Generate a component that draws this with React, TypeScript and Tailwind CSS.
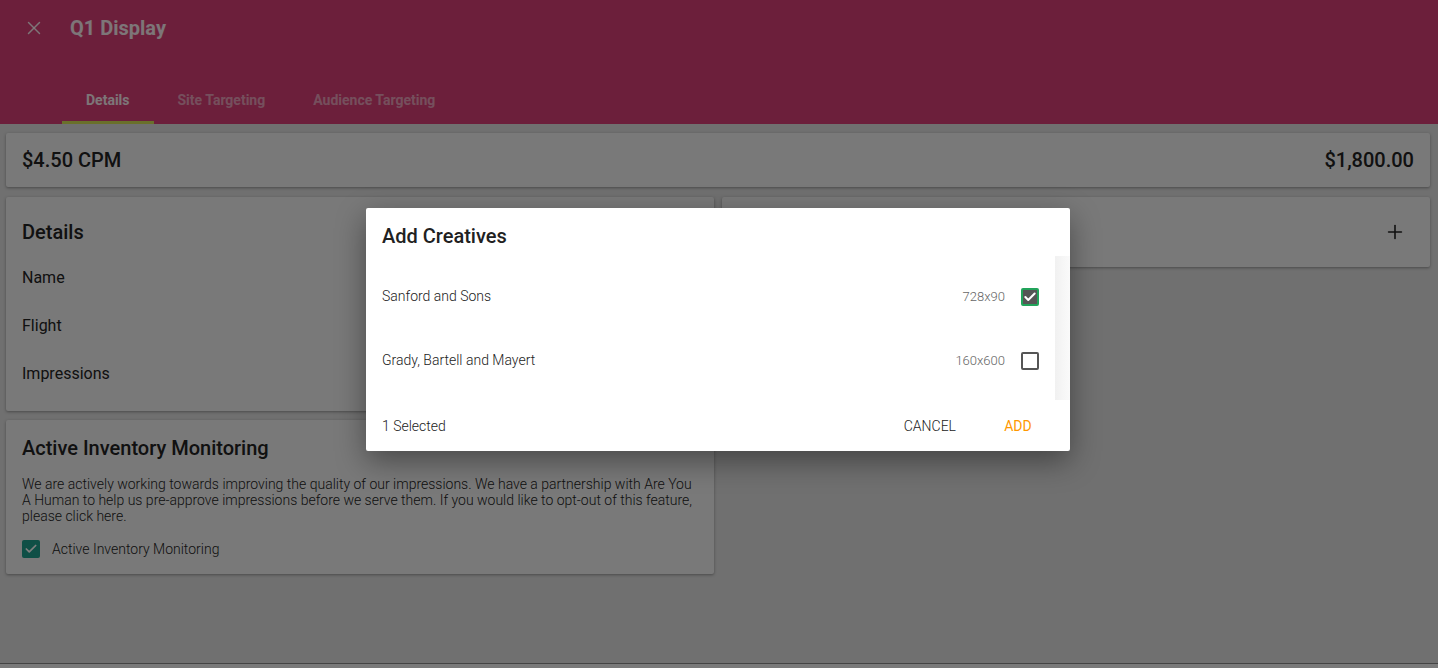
import { X, Plus, Check } from 'lucide-react';

const creatives = [
  { id: 1, name: 'Sanford and Sons', size: '728x90', checked: true },
  { id: 2, name: 'Grady, Bartell and Mayert', size: '160x600', checked: false },
];

const tabs = ['Details', 'Site Targeting', 'Audience Targeting'];

export default function App() {
  return (
    <div className="relative h-screen w-full overflow-hidden bg-[#e0e0e0] font-['Roboto',sans-serif] text-[#222]">
      <div className="flex h-full flex-col">
        {/* Header */}
        <header className="h-[124px] shrink-0 bg-[#d83e76]">
          <div className="flex h-[56px] items-center">
            <button className="ml-[23px] flex h-[22px] w-[22px] items-center justify-center text-white/90">
              <X size={22} strokeWidth={1.6} />
            </button>
            <h1 className="ml-[25px] text-[20px] font-bold text-white/90">Q1 Display</h1>
          </div>
          <nav className="ml-[62px] mt-[20px] flex h-[48px]">
            {tabs.map((t, i) => (
              <div
                key={t}
                className={`flex items-center border-b-[3px] px-6 pt-[3px] text-[14px] font-bold ${
                  i === 0 ? 'border-[#d4e157] text-white/90' : 'border-transparent text-white/50'
                }`}
              >
                {t}
              </div>
            ))}
          </nav>
        </header>

        {/* Body */}
        <main className="ml-[6px] mr-[8px] mt-[9px] flex flex-1 flex-col">
          <div className="flex h-[54px] items-center justify-between rounded-[2px] bg-[#f2f2f2] px-4 shadow-[0_1px_3px_rgba(0,0,0,0.35)]">
            <span className="text-[20px] font-medium">$4.50 CPM</span>
            <span className="text-[20px] font-medium">$1,800.00</span>
          </div>

          <div className="mt-[10px] grid grid-cols-2 gap-[8px]">
            <div className="flex flex-col gap-[9px]">
              <section className="rounded-[2px] bg-[#f2f2f2] px-4 pb-[14px] pt-[23px] shadow-[0_1px_3px_rgba(0,0,0,0.35)]">
                <h2 className="text-[20px] font-medium leading-6">Details</h2>
                <div className="mt-[9px]">
                  {['Name', 'Flight', 'Impressions'].map((l) => (
                    <div key={l} className="flex h-12 items-center pt-[1px] text-[16px]">
                      {l}
                    </div>
                  ))}
                </div>
              </section>

              <section className="rounded-[2px] bg-[#f2f2f2] px-4 pb-[13px] pt-4 shadow-[0_1px_3px_rgba(0,0,0,0.35)]">
                <h2 className="text-[20px] font-medium leading-6">Active Inventory Monitoring</h2>
                <p className="mt-4 text-[14px] font-light leading-4 text-[#222]">
                  We are actively working towards improving the quality of our impressions. We have a partnership with Are You A Human to help us pre-approve impressions before we serve them. If you would like to opt-out of this feature, please click here.
                </p>
                <label className="mt-[13px] flex h-6 items-center gap-3 text-[14px] font-light text-[#222]">
                  <span className="flex h-[18px] w-[18px] items-center justify-center rounded-[2px] bg-[#1f9e8c] text-white">
                    <Check size={14} strokeWidth={3} />
                  </span>
                  Active Inventory Monitoring
                </label>
              </section>
            </div>

            <div>
              <section className="flex h-[70px] items-center justify-end rounded-[2px] bg-[#f2f2f2] pr-[24px] shadow-[0_1px_3px_rgba(0,0,0,0.35)]">
                <Plus size={22} strokeWidth={1.75} className="text-[#222]" />
              </section>
            </div>
          </div>
        </main>

        <div className="h-[5px] shrink-0 border-t border-[#888] bg-[#f4f4f4]" />
      </div>

      {/* Dim overlay */}
      <div className="absolute inset-0 bg-black/50" />

      {/* Modal */}
      <div className="absolute inset-0 flex items-center justify-center pb-[10px] pr-[2px]">
        <div className="w-[704px] rounded-[2px] bg-white shadow-[0_10px_30px_rgba(0,0,0,0.4)]">
          <div className="h-[48px] pl-4 pt-4">
            <h3 className="text-[20px] font-medium leading-6 text-[#212121]">Add Creatives</h3>
          </div>
          <div className="flex h-[144px]">
            <ul className="flex-1 py-2 pl-4 pr-4">
              {creatives.map((c) => (
                <li key={c.id} className="flex h-16 items-center pt-[2px] text-[14px] font-light text-[#222]">
                  <span className="flex-1">{c.name}</span>
                  <span className="mr-4 text-[13px] text-[#666]">{c.size}</span>
                  {c.checked ? (
                    <span className="flex h-[18px] w-[18px] items-center justify-center rounded-[2px] border-2 border-[#22a35a] bg-[#555] text-white">
                      <Check size={14} strokeWidth={3.5} />
                    </span>
                  ) : (
                    <span className="h-[18px] w-[18px] rounded-[2px] border-2 border-[#555]" />
                  )}
                </li>
              ))}
            </ul>
            <div className="w-[15px] bg-gradient-to-r from-[#f1f1f1] to-[#fafafa]" />
          </div>
          <div className="flex h-[51px] items-center pl-4 pr-[20px] pt-[2px]">
            <span className="flex-1 text-[14px] font-light text-[#222]">1 Selected</span>
            <button className="min-w-16 px-4 text-[14px] font-light uppercase text-[#222]">Cancel</button>
            <button className="ml-[14px] min-w-16 px-4 text-[14px] uppercase text-[#ff9800]">Add</button>
          </div>
        </div>
      </div>
    </div>
  );
}
